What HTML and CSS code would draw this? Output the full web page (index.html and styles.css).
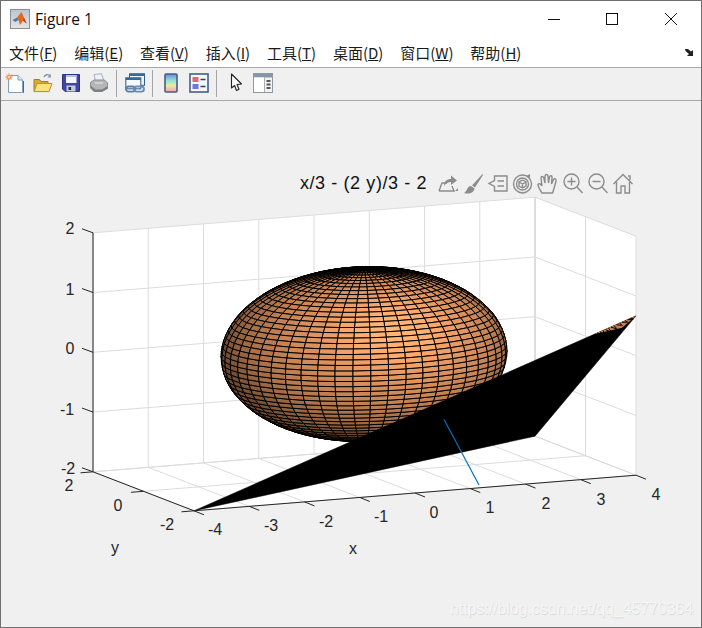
FILE: index.html
```html
<!DOCTYPE html>
<html lang="zh-CN">
<head>
<meta charset="utf-8">
<title>Figure 1</title>
<link rel="stylesheet" href="styles.css">
</head>
<body>
<div class="window">
  <header class="titlebar">
    <svg class="app-icon" viewBox="0 0 20 20" width="20" height="20">
      <defs><linearGradient id="fr" x1="0" y1="0" x2="0" y2="1"><stop offset="0" stop-color="#b9c4d2"/><stop offset="1" stop-color="#e4e4e4"/></linearGradient></defs>
      <rect x="0.5" y="0.5" width="19" height="19" fill="url(#fr)" stroke="#8f8f8f"/>
      <path d="M2.5 11 L7 8.6 L9 10.5 L5.5 13 Z" fill="#3f7fb8"/>
      <path d="M7 8.6 L11.5 3 L16.5 14.5 L13 11.5 L10 16 L8.5 11 Z" fill="#e8661a"/>
      <path d="M11.5 3 L14 9 L13 11.5 L16.5 14.5 Z" fill="#c9331a"/>
    </svg>
    <span class="app-title">Figure 1</span>
    <div class="win-controls">
      <svg class="win-btn" viewBox="0 0 12 13" width="12" height="13"><path d="M0 6.5H12" stroke="#111" fill="none"/></svg>
      <svg class="win-btn win-max" viewBox="0 0 12 12" width="12" height="12"><rect x="0.5" y="0.5" width="11" height="11" fill="none" stroke="#111"/></svg>
      <svg class="win-btn" viewBox="0 0 12 12" width="12" height="12"><path d="M0 0L12 12M12 0L0 12" stroke="#111" fill="none"/></svg>
    </div>
  </header>
  <nav class="menubar">
    <span class="menu">文件(<u>F</u>)</span>
    <span class="menu">编辑(<u>E</u>)</span>
    <span class="menu">查看(<u>V</u>)</span>
    <span class="menu">插入(<u>I</u>)</span>
    <span class="menu">工具(<u>T</u>)</span>
    <span class="menu">桌面(<u>D</u>)</span>
    <span class="menu">窗口(<u>W</u>)</span>
    <span class="menu">帮助(<u>H</u>)</span>
    <svg class="dock" viewBox="0 0 10 9" width="10" height="9"><path d="M0 1H3L6 3.5L8 2V8H2L4 6L0.5 3Z" fill="#222"/></svg>
  </nav>
  <div class="toolbar">
    <svg class="tool" viewBox="0 0 20 20"><path d="M3.5 2.5H13L17.5 7V19.5H3.5Z" fill="#fbfdff" stroke="#7f9dbd"/><path d="M13 2.5V7H17.5" fill="#d7e5f3" stroke="#7f9dbd"/><path d="M18.5 19.8V8" stroke="#2f6ea5"/><circle cx="4" cy="4" r="2.6" fill="#f08a4b"/><path d="M4 0V8M0 4H8M1.2 1.2L6.8 6.8M6.8 1.2L1.2 6.8" stroke="#f2a678" stroke-width="0.8"/><circle cx="4" cy="4" r="1" fill="#fde3c8"/></svg>
    <svg class="tool" viewBox="0 0 20 20"><path d="M11 4C12 1.5 15 1 17 2.5" fill="none" stroke="#7f93a8" stroke-width="1.4"/><path d="M17.8 1V4.4H14.4Z" fill="#7f93a8"/><path d="M1 6.5H6.5L8 8.5H15V18.5H1Z" fill="#d7a93a" stroke="#a47f22"/><path d="M1.2 18.6L4 10.5H19L16 18.6Z" fill="#fbe27d" stroke="#b8912c"/></svg>
    <svg class="tool" viewBox="0 0 20 20"><path d="M1.5 1.5H18.5V18.5H4L1.5 16Z" fill="#3f46a8" stroke="#2d3380"/><rect x="5" y="2" width="10.5" height="8" fill="#f4f6fb"/><rect x="5" y="2" width="10.5" height="2" fill="#a9c3e3"/><rect x="5.5" y="12.5" width="9" height="6" fill="#c6c9de"/><rect x="7.5" y="14" width="2.6" height="3" fill="#24284f"/></svg>
    <svg class="tool" viewBox="0 0 20 20"><path d="M5 1.5L12.5 0.8L15 8H6.5Z" fill="#eef2f6" stroke="#a8b0b8"/><path d="M1.5 9.5L5 7H15.5L18.5 10V15.5L13 18.5H5L1.5 15Z" fill="#b4b6b8" stroke="#8b8d8f"/><path d="M2 13L6.5 16.5H13L18.3 13V15.6L13 18.5H5L2 15Z" fill="#7c7e80"/><path d="M6 10H14" stroke="#ececec"/></svg>
    <span class="sep"></span>
    <svg class="tool" viewBox="0 0 20 20"><rect x="4.5" y="0.8" width="15" height="11.5" fill="#eef3f8" stroke="#2f5d8c"/><rect x="4.5" y="0.8" width="15" height="2.2" fill="#33699c"/><rect x="0.8" y="4.8" width="15" height="11" fill="#f6f8fb" stroke="#2f5d8c"/><rect x="0.8" y="4.8" width="15" height="2.2" fill="#33699c"/><rect x="1" y="13.5" width="9" height="5.2" rx="2.6" fill="none" stroke="#5a7da0" stroke-width="1.8"/><rect x="9" y="13.5" width="10" height="5.2" rx="2.6" fill="none" stroke="#6a8cae" stroke-width="1.8"/></svg>
    <span class="sep"></span>
    <svg class="tool" viewBox="0 0 20 20"><defs><linearGradient id="cb" x1="0" y1="0" x2="0" y2="1"><stop offset="0" stop-color="#6a88d8"/><stop offset="0.35" stop-color="#8fe0d8"/><stop offset="0.65" stop-color="#e8ec9c"/><stop offset="1" stop-color="#ef9fb8"/></linearGradient></defs><rect x="4" y="1" width="12" height="18" rx="1" fill="url(#cb)" stroke="#4a5d86" stroke-width="1.6"/></svg>
    <svg class="tool" viewBox="0 0 20 20"><rect x="1" y="1" width="18" height="18" fill="#f6f7fb" stroke="#4a5d86" stroke-width="1.6"/><rect x="3.5" y="4" width="6" height="5" fill="#e26a6e"/><rect x="3.5" y="11" width="6" height="5" fill="#6a78e0"/><path d="M11.5 6.5H16.5M11.5 13.5H16.5" stroke="#33405f" stroke-width="1.6"/></svg>
    <span class="sep"></span>
    <svg class="tool" viewBox="0 0 20 20"><path d="M6.5 1L6.5 15L9.6 12.5L11.5 17.5L14 16.3L12 11.5L16.5 11Z" fill="#fafafa" stroke="#222" stroke-width="1.1" stroke-linejoin="round"/></svg>
    <svg class="tool" viewBox="0 0 20 20"><rect x="0.5" y="0.5" width="19" height="19" fill="#f2f3f4" stroke="#8f979f"/><rect x="1" y="1" width="18" height="3.5" fill="#8497a8"/><rect x="1" y="4.5" width="10" height="14.5" fill="#fff"/><path d="M11.5 4.5V19" stroke="#a7adb3"/><path d="M13.5 8H17.5M13.5 11.5H17.5M13.5 15H17.5" stroke="#55595e" stroke-width="1.8"/></svg>
  </div>
  <main class="figure">
    <svg id="plot" class="plot" viewBox="1 101 700 526" width="700" height="526">
      <g id="axes-bg"></g>
      <g id="mesh" transform="translate(-0.5,0)"></g>
      <g id="plane"></g>
      <g id="axes-fg"></g>
      <text class="title" x="363.5" y="189" text-anchor="middle">x/3 - (2 y)/3 - 2</text>
      <g class="ticks">
        <text x="70" y="234" text-anchor="middle">2</text>
        <text x="70" y="295" text-anchor="middle">1</text>
        <text x="70" y="354" text-anchor="middle">0</text>
        <text x="67" y="415" text-anchor="middle">-1</text>
        <text x="68" y="474" text-anchor="middle">-2</text>
        <text x="69" y="491" text-anchor="middle">2</text>
        <text x="118" y="511" text-anchor="middle">0</text>
        <text x="167" y="530" text-anchor="middle">-2</text>
        <text x="215" y="535" text-anchor="middle">-4</text>
        <text x="271" y="531" text-anchor="middle">-3</text>
        <text x="326" y="527" text-anchor="middle">-2</text>
        <text x="381" y="522" text-anchor="middle">-1</text>
        <text x="434" y="518" text-anchor="middle">0</text>
        <text x="490" y="513" text-anchor="middle">1</text>
        <text x="546" y="509" text-anchor="middle">2</text>
        <text x="601" y="505" text-anchor="middle">3</text>
        <text x="656" y="500" text-anchor="middle">4</text>
        <text x="115" y="553" text-anchor="middle">y</text>
        <text x="353" y="554" text-anchor="middle">x</text>
      </g>
      <g class="ax-tools">
        <g transform="translate(438,174)"><path d="M1 17L4 9H9M14 12L16 17H1" /><path d="M6 12C6 7 9 5 13 5V1.5L19 6.5L13 11V8C10 8 8 9 6 12Z" class="solid"/><path d="M17 17H20V14Z" class="solid"/></g>
        <g transform="translate(463,173)"><path d="M19.5 1L9 12.5L12 14.5L20 2Z" class="solid"/><path d="M8 13C4 13 4.5 18 1 20C6 21.5 11 20 11.5 15.5Z" class="solid"/></g>
        <g transform="translate(488,174)"><path d="M6.5 2H19V17H6.5V12.5L1 9.5L6.5 6.5Z"/><path d="M9.5 7H16M9.5 12H16"/></g>
        <g transform="translate(513,173)"><circle cx="9.5" cy="11" r="9"/><circle cx="9.5" cy="11" r="6"/><path d="M9.5 7L13 9V13L9.5 15L6 13V9ZM6 9L9.5 11L13 9M9.5 11V15"/><path d="M13 3L17 1L17 5Z" class="solid"/></g>
        <g transform="translate(537,173)"><path d="M5 20C3 17 1 14 1 11.5C2 10 3.5 10.5 5 13L4 5C4 3 6.2 3 6.8 5L8 10L8 3C8.3 1 10.7 1 11 3L11.5 10L12.5 4C13 2 15.3 2.5 15 4.5L14.5 11L16.5 6.5C17.5 5 19.5 6 19 8C18 12 17 16 15.5 20Z"/></g>
        <g transform="translate(563,173)"><circle cx="8.5" cy="8.5" r="7.5"/><path d="M14 14L19.5 20M8.5 4.5V12.5M4.5 8.5H12.5"/></g>
        <g transform="translate(588,173)"><circle cx="8.5" cy="8.5" r="7.5"/><path d="M14 14L19.5 20M4.5 8.5H12.5"/></g>
        <g transform="translate(613,173)"><path d="M0.5 11L10 1.5L19.5 11M3.5 9V20H8V13H12V20H16.5V9M15 3H17V7"/></g>
      </g>
      <text class="watermark shadow" x="450.6" y="614.6">https://blog.csdn.net/qq_45770364</text>
      <text class="watermark" x="450" y="614">https://blog.csdn.net/qq_45770364</text>
    </svg>
  </main>
</div>
<script src="script.js"></script>
</body>
</html>
```
FILE: styles.css
```css
* { box-sizing: border-box; }
html, body { margin: 0; padding: 0; overflow: hidden; }
body { width: 702px; height: 628px; background: #f0f0f0; }
.window {
  width: 702px; height: 628px;
  display: flex; flex-direction: column;
  border: 1px solid #6f6f6f;
  background: #f0f0f0;
}
.titlebar {
  height: 36px; flex: none;
  display: flex; align-items: center;
  padding-left: 9px;
  background: #fff;
}
.app-icon { flex: none; }
.app-title {
  margin-left: 5px;
  font: 15.5px "Open Sans", "Noto Sans", sans-serif;
  color: #111;
}
.win-controls {
  margin-left: auto;
  display: flex; align-items: center; gap: 46px;
  padding-right: 24px;
}
.win-max { margin-right: 1px; }
.menubar {
  height: 31px; flex: none;
  display: flex; align-items: center;
  padding-left: 8px;
  background: #fff;
  border-bottom: 1px solid #a8a8a8;
  font: 15px "Noto Sans CJK SC", "Liberation Sans", sans-serif;
  color: #1a1a1a;
}
.menu { white-space: nowrap; margin-right: 16.8px; }
.dock { margin-left: auto; margin-right: 6px; }
.toolbar {
  height: 33px; flex: none;
  display: flex; align-items: center;
  padding: 0 0 2px 4px;
  background: #f0f0f0;
  border-bottom: 1px solid #a8a8a8;
}
.tool { width: 20px; height: 20px; margin-right: 8px; flex: none; }
.sep { width: 1px; height: 27px; background: #a4a4a4; margin: 0 8px 0 -1px; flex: none; }
.figure { flex: 1; min-height: 0; background: #f0f0f0; }
.plot { display: block; }
.title { font: 18px "Liberation Sans", Arial, sans-serif; letter-spacing: 0.6px; fill: #111; }
.ticks text { font: 16px "Liberation Sans", Arial, sans-serif; fill: #262626; }
.ax-tools { fill: none; stroke: #8c8c8c; stroke-width: 1.4; }
.ax-tools .solid { fill: #8c8c8c; stroke: none; }
.watermark { font: 15.85px "Liberation Sans", Arial, sans-serif; fill: #f6f6f6; }
.watermark.shadow { fill: #dadada; }
.wall { fill: #fff; stroke: none; }
.grid { stroke: #dcdcdc; stroke-width: 1; fill: none; }
.grid-back { stroke: #bdbdbd; }
.axis { stroke: #262626; stroke-width: 1; fill: none; }
.face { stroke: #000; stroke-width: 1; stroke-linejoin: round; }
.plane { fill: #000; stroke: #000; stroke-width: 0.5; }
.sliver { fill: #c98355; }
.sliver-line { stroke: #000; stroke-width: 1; }
.blue { stroke: #0072bd; stroke-width: 1.2; fill: none; }
```
FILE: script.js
```js
(function () {
  var NS = 'http://www.w3.org/2000/svg';
  var CX = 364.5, CY = 354;
  function P(x, y, z) {
    return [CX + 55.25 * x - 25.25 * y, CY - 4.45 * x - 9.75 * y - 59.75 * z];
  }
  function add(parent, tag, cls, attrs) {
    var el = document.createElementNS(NS, tag);
    if (cls) el.setAttribute('class', cls);
    for (var k in attrs) el.setAttribute(k, attrs[k]);
    document.getElementById(parent).appendChild(el);
    return el;
  }
  function line(parent, cls, a, b) {
    add(parent, 'line', cls, { x1: a[0], y1: a[1], x2: b[0], y2: b[1] });
  }
  function pts(list) {
    return list.map(function (p) { return p[0].toFixed(2) + ',' + p[1].toFixed(2); }).join(' ');
  }

  // walls and floor
  add('axes-bg', 'polygon', 'wall', { points: pts([P(-4, 2, 2), P(4, 2, 2), P(4, -2, 2), P(4, -2, -2), P(-4, -2, -2), P(-4, 2, -2)]) });
  var i;
  for (i = -4; i <= 4; i++) {
    line('axes-bg', 'grid' + (i === 4 ? ' grid-back' : ''), P(i, 2, -2), P(i, 2, 2));
    line('axes-bg', 'grid', P(i, 2, -2), P(i, -2, -2));
  }
  [-2, 0, 2].forEach(function (y) {
    line('axes-bg', 'grid', P(-4, y, -2), P(4, y, -2));
    line('axes-bg', 'grid', P(4, y, -2), P(4, y, 2));
  });
  for (i = -2; i <= 2; i++) {
    line('axes-bg', 'grid', P(-4, 2, i), P(4, 2, i));
    line('axes-bg', 'grid', P(4, 2, i), P(4, -2, i));
  }

  // ellipsoid, 50 x 50 panels
  var A = 2.42, B = 2, C = Math.sqrt(2), N = 50;
  var V = [-1508.7, -3301, 651];
  var vl = Math.sqrt(V[0] * V[0] + V[1] * V[1] + V[2] * V[2]);
  V = [V[0] / vl, V[1] / vl, V[2] / vl];
  function S(i, j) {
    var t = -Math.PI + 2 * Math.PI * i / N, f = -Math.PI / 2 + Math.PI * j / N;
    return [A * Math.cos(f) * Math.cos(t), B * Math.cos(f) * Math.sin(t), C * Math.sin(f)];
  }
  function facing(p) {
    return p[0] / (A * A) * V[0] + p[1] / (B * B) * V[1] + p[2] / (C * C) * V[2];
  }
  var faces = [];
  for (var a = 0; a < N; a++) {
    for (var b = 0; b < N; b++) {
      var q = [S(a, b), S(a + 1, b), S(a + 1, b + 1), S(a, b + 1)];
      if (!q.some(function (p) { return facing(p) > 0; })) continue;
      var m = [0, 1, 2].map(function (k) { return (q[0][k] + q[1][k] + q[2][k] + q[3][k]) / 4; });
      faces.push({ q: q, m: m, d: m[0] * V[0] + m[1] * V[1] + m[2] * V[2] });
    }
  }
  faces.sort(function (u, v) { return u.d - v.d; });
  faces.forEach(function (f) {
    var s = P(f.m[0], f.m[1], f.m[2]);
    var X = (s[0] - CX) / 143, Y = (CY - s[1]) / 88;
    var Z = Math.sqrt(Math.max(0, 1 - X * X - Y * Y));
    var I = Math.max(0, X * 0.22 + Y * 0.26 + Z * 0.94);
    var k = 0.44 + 0.52 * I + 0.14 * Math.pow(I, 12);
    var col = 'rgb(' + Math.min(255, Math.round(250 * k)) + ',' + Math.round(166 * k) + ',' + Math.round(108 * k) + ')';
    add('mesh', 'polygon', 'face', { points: pts(f.q.map(function (p) { return P(p[0], p[1], p[2]); })), fill: col });
  });

  // plane z = x/3 - 2y/3 - 2, drawn so densely that the mesh reads as solid black
  var tip = P(4, -2, 2 / 3);
  add('plane', 'polygon', 'plane', { points: pts([P(-4, -2, -2), tip, P(4, 2, -2)]) });
  add('plane', 'polygon', 'sliver', { points: pts([[tip[0] - 42, tip[1] + 18.5], tip, [tip[0] - 14, tip[1] + 12]]) });
  for (i = 1; i < 8; i++) {
    var t = i * 5.5;
    line('plane', 'sliver-line', [tip[0] - t, tip[1] + t * 0.44], [tip[0] - t + 3, tip[1] + t * 0.44 + 6 * (t / 40)]);
    line('plane', 'sliver-line', [tip[0] - t + 2, tip[1] + t * 0.58], [tip[0] - t - 3, tip[1] + (t + 3) * 0.44 + 0.3]);
  }
  line('plane', 'blue', [444, 419.5], [479, 485]);

  // axis rulers and tick marks
  line('axes-fg', 'axis', P(-4, 2, -2), P(-4, 2, 2));
  line('axes-fg', 'axis', P(-4, 2, -2), P(-4, -2, -2));
  line('axes-fg', 'axis', P(-4, -2, -2), P(4, -2, -2));
  for (i = -2; i <= 2; i++) {
    var z = P(-4, 2, i);
    line('axes-fg', 'axis', z, [z[0] - 11, z[1] - 4]);
  }
  [2, 0, -2].forEach(function (y) {
    var c = P(-4, y, -2);
    line('axes-fg', 'axis', c, [c[0] - 12.5, c[1] + 1]);
  });
  for (i = -4; i <= 4; i++) {
    var c = P(i, -2, -2);
    line('axes-fg', 'axis', c, [c[0] + 10, c[1] + 4]);
  }
})();
```
